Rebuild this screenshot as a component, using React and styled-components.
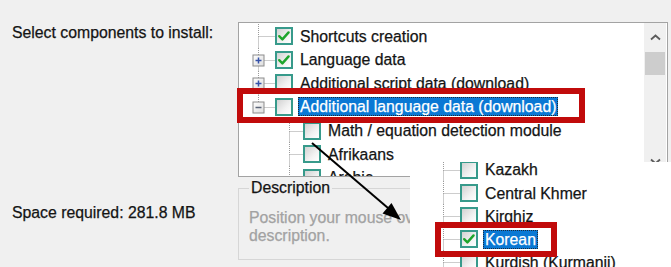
import styled, { createGlobalStyle } from 'styled-components';

const GlobalStyle = createGlobalStyle`
  html, body {
    margin: 0;
    padding: 0;
    background: #f0f0f0;
  }
  body {
    font-family: "Liberation Sans", Arial, sans-serif;
    color: #141414;
  }
`;

const Page = styled.div`
  position: relative;
  width: 671px;
  height: 267px;
  box-sizing: border-box;
  padding-top: 22px;
  overflow: hidden;
  display: grid;
  grid-template-columns: 238px 430px;
  grid-template-rows: 155px 1fr;
  row-gap: 2px;
  font-size: 15.8px;
  -webkit-text-stroke: 0.25px currentColor;
`;

const SideLabel = styled.div`
  padding: ${p => p.$top}px 0 0 12px;
  line-height: 18px;
  white-space: nowrap;
`;

const Tree = styled.div`
  display: flex;
  box-sizing: border-box;
  border: 1px solid #a3a3a3;
  background: #fff;
  overflow: hidden;
`;

const TreeBody = styled.div`
  flex: 1;
  padding-top: 1.4px;
  overflow: hidden;
`;

const Row = styled.div`
  display: flex;
  align-items: center;
  height: ${p => p.$h}px;
  padding-left: ${p => p.$level * 28}px;
  white-space: nowrap;
`;

const BranchSvg = styled.svg`
  flex: none;
  display: block;
`;

const Box = styled.span`
  flex: none;
  width: 18px;
  height: 18px;
  box-sizing: border-box;
  border: 2px solid #379a8b;
  background: linear-gradient(135deg, #d2d2d2 0%, #f2f2f2 60%, #ffffff 100%);
  display: flex;
  align-items: center;
  justify-content: center;
`;

const Text = styled.span`
  margin-left: 5px;
  padding: 0 2px;
  line-height: 19px;
  color: ${p => (p.$selected ? '#fff' : '#141414')};
  background: ${p => (p.$selected ? '#0a78d4' : 'transparent')};
  outline: ${p => (p.$selected ? '1px dotted #1d2a3a' : 'none')};
  outline-offset: -1px;
`;

const Scrollbar = styled.div`
  flex: none;
  width: 22px;
  margin-right: 1px;
  background: #f0f0f0;
  display: flex;
  flex-direction: column;
`;

const ScrollButton = styled.div`
  height: ${p => p.$h}px;
  display: flex;
  align-items: center;
  justify-content: center;
`;

const Thumb = styled.div`
  height: 23px;
  margin: 0 1px;
  background: #cdcdcd;
`;

const Track = styled.div`
  flex: 1;
`;

const GroupBox = styled.fieldset`
  margin: 0;
  padding: 0 12px 0 10px;
  height: 81px;
  box-sizing: border-box;
  border: 1px solid #d6d6d6;
  min-width: 0;
`;

const Legend = styled.legend`
  padding: 0 2px;
  line-height: 18px;
  color: #141414;
`;

const Hint = styled.p`
  margin: 12px 0 0;
  line-height: 18px;
  color: #a2a2a2;
`;

const Inset = styled.div`
  position: absolute;
  left: 410px;
  top: 162px;
  right: 0;
  bottom: 0;
  background: #fff;
  overflow: hidden;
`;

const InsetList = styled.div`
  margin-top: -3.6px;
  padding-left: 14px;
`;

const Callout = styled.div`
  position: absolute;
  left: ${p => p.$x}px;
  top: ${p => p.$y}px;
  width: ${p => p.$w}px;
  height: ${p => p.$h}px;
  box-sizing: border-box;
  border: 6px solid #c10b0b;
  pointer-events: none;
`;

const Pointer = styled.svg`
  position: absolute;
  left: 300px;
  top: 135px;
  pointer-events: none;
`;

function Branch({ up = true, down = true, expander, x = 19.5 }) {
  const dot = { stroke: '#9a9a9a', strokeWidth: 1, strokeDasharray: '1 1' };
  return (
    <BranchSvg width="36" height="24" viewBox="0 0 36 24">
      {up && <line x1={x} y1="0" x2={x} y2="12.5" {...dot} />}
      {down && <line x1={x} y1="12.5" x2={x} y2="24" {...dot} />}
      <line x1={expander ? x + 5 : x} y1="12.5" x2="36" y2="12.5" {...dot} />
      {expander && (
        <g>
          <defs>
            <linearGradient id="exp" x1="0" y1="0" x2="1" y2="1">
              <stop offset="0" stopColor="#ffffff" />
              <stop offset="1" stopColor="#dcdcdc" />
            </linearGradient>
          </defs>
          <rect x={x - 5.5} y="7" width="11" height="11" fill="url(#exp)" stroke="#8c8c8c" />
          <line x1={x - 3} y1="12.5" x2={x + 3} y2="12.5" stroke={expander === 'plus' ? '#3552a8' : '#5a6478'} strokeWidth="1.5" />
          {expander === 'plus' && (
            <line x1={x} y1="9.5" x2={x} y2="15.5" stroke="#3552a8" strokeWidth="1.5" />
          )}
        </g>
      )}
    </BranchSvg>
  );
}

function Check({ checked }) {
  return (
    <Box>
      {checked && (
        <svg width="14" height="14" viewBox="0 0 14 14">
          <path d="M2.2 7.2 L5.4 10.4 L11.6 3.4" fill="none" stroke="#1ea52c" strokeWidth="2.4" strokeLinecap="round" strokeLinejoin="round" />
        </svg>
      )}
    </Box>
  );
}

function Chevron({ down }) {
  return (
    <svg width="11" height="7" viewBox="0 0 11 7">
      <path d={down ? 'M1 1.5 L5.5 5.5 L10 1.5' : 'M1 5.5 L5.5 1.5 L10 5.5'} fill="none" stroke="#5c5c5c" strokeWidth="1.8" />
    </svg>
  );
}

const treeItems = [
  { label: 'Shortcuts creation', level: 0, checked: true },
  { label: 'Language data', level: 0, checked: true, expander: 'plus' },
  { label: 'Additional script data (download)', level: 0, expander: 'plus' },
  { label: 'Additional language data (download)', level: 0, expander: 'minus', last: true, selected: true },
  { label: 'Math / equation detection module', level: 1 },
  { label: 'Afrikaans', level: 1 },
  { label: 'Arabic', level: 1 },
];

const insetItems = [
  { label: 'Kazakh' },
  { label: 'Central Khmer' },
  { label: 'Kirghiz' },
  { label: 'Korean', checked: true, selected: true },
  { label: 'Kurdish (Kurmanji)' },
];

function TreeRow({ item, h }) {
  return (
    <Row $level={item.level || 0} $h={h}>
      <Branch expander={item.expander} down={!item.last} x={item.level ? 22.5 : 19.5} />
      <Check checked={item.checked} />
      <Text $selected={item.selected}>{item.label}</Text>
    </Row>
  );
}

export default function App() {
  return (
    <>
      <GlobalStyle />
      <Page>
        <SideLabel $top={2}>Select components to install:</SideLabel>
        <Tree>
          <TreeBody>
            {treeItems.map(item => (
              <TreeRow key={item.label} item={item} h={23.6} />
            ))}
          </TreeBody>
          <Scrollbar>
            <ScrollButton $h={29}>
              <Chevron />
            </ScrollButton>
            <Thumb />
            <Track />
            <ScrollButton $h={30}>
              <Chevron down />
            </ScrollButton>
          </Scrollbar>
        </Tree>
        <SideLabel $top={25}>Space required: 281.8 MB</SideLabel>
        <GroupBox>
          <Legend>Description</Legend>
          <Hint>Position your mouse over a component to see its description.</Hint>
        </GroupBox>

        <Callout $x={237} $y={88} $w={348} $h={35} />

        <Pointer width="110" height="95" viewBox="0 0 110 95">
          <line x1="12" y1="8" x2="88" y2="73" stroke="#000" strokeWidth="2" />
          <polygon points="101,85 82.5,78.5 91.5,68" fill="#000" />
        </Pointer>

        <Inset>
          <InsetList>
            {insetItems.map(item => (
              <TreeRow key={item.label} item={item} h={23.1} />
            ))}
          </InsetList>
        </Inset>
        <Callout $x={435} $y={222} $w={122} $h={35} />
      </Page>
    </>
  );
}
